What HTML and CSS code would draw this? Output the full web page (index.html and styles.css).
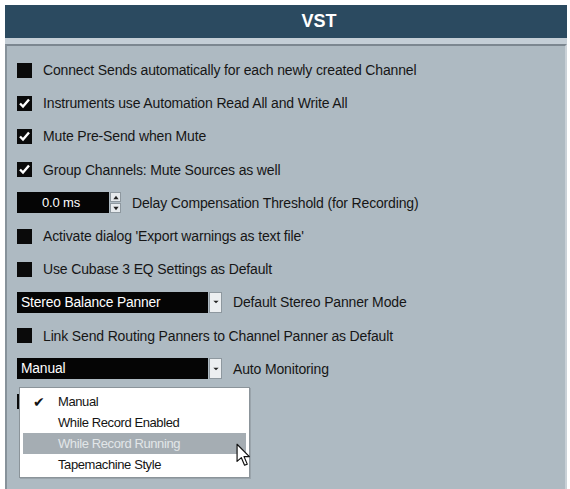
FILE: index.html
```html
<!DOCTYPE html>
<html>
<head>
<meta charset="utf-8">
<link rel="stylesheet" href="styles.css">
</head>
<body>
<div class="window">
  <div class="title">VST</div>
  <div class="strip"></div>
  <div class="panel">
    <div class="row"><span class="cb"></span><span class="lbl">Connect Sends automatically for each newly created Channel</span></div>
    <div class="row"><span class="cb on"><svg viewBox="0 0 15 15"><path d="M3 7.5 L6 10.5 L12 3.5" fill="none" stroke="#fff" stroke-width="2.4"/></svg></span><span class="lbl">Instruments use Automation Read All and Write All</span></div>
    <div class="row"><span class="cb on"><svg viewBox="0 0 15 15"><path d="M3 7.5 L6 10.5 L12 3.5" fill="none" stroke="#fff" stroke-width="2.4"/></svg></span><span class="lbl">Mute Pre-Send when Mute</span></div>
    <div class="row"><span class="cb on"><svg viewBox="0 0 15 15"><path d="M3 7.5 L6 10.5 L12 3.5" fill="none" stroke="#fff" stroke-width="2.4"/></svg></span><span class="lbl">Group Channels: Mute Sources as well</span></div>
    <div class="row">
      <span class="num">0.0 ms</span>
      <span class="spin"><span class="sb"><svg viewBox="0 0 9 8"><path d="M1.5 6 L4.5 2 L7.5 6Z" fill="#222"/></svg></span><span class="sb"><svg viewBox="0 0 9 8"><path d="M1.5 2 L4.5 6 L7.5 2Z" fill="#222"/></svg></span></span>
      <span class="lbl">Delay Compensation Threshold (for Recording)</span>
    </div>
    <div class="row"><span class="cb"></span><span class="lbl">Activate dialog 'Export warnings as text file'</span></div>
    <div class="row"><span class="cb"></span><span class="lbl">Use Cubase 3 EQ Settings as Default</span></div>
    <div class="row">
      <span class="combo"><span class="val">Stereo Balance Panner</span><span class="drop"><svg viewBox="0 0 9 6"><path d="M1.5 1.5 L4.5 4.5 L7.5 1.5Z" fill="#222"/></svg></span></span>
      <span class="lbl">Default Stereo Panner Mode</span>
    </div>
    <div class="row"><span class="cb"></span><span class="lbl">Link Send Routing Panners to Channel Panner as Default</span></div>
    <div class="row">
      <span class="combo"><span class="val">Manual</span><span class="drop"><svg viewBox="0 0 9 6"><path d="M1.5 1.5 L4.5 4.5 L7.5 1.5Z" fill="#222"/></svg></span></span>
      <span class="lbl">Auto Monitoring</span>
    </div>
    <div class="row"><span class="cb"></span><span class="lbl"></span></div>

    <div class="menu">
      <div class="item"><span class="tick">&#10004;</span>Manual</div>
      <div class="item">While Record Enabled</div>
      <div class="item hl">While Record Running</div>
      <div class="item">Tapemachine Style</div>
    </div>
    <svg class="cursor" viewBox="0 0 14 22" width="15" height="24"><path d="M1 1 L1 17 L5 13.5 L8 20.5 L10.5 19.5 L7.5 12.5 L12.5 12.5 Z" fill="#fff" stroke="#111" stroke-width="1.1" stroke-linejoin="round"/></svg>
  </div>
</div>
</body>
</html>
```

FILE: styles.css
```css
body {
  margin: 0;
  background: #ffffff;
  font-family: "Liberation Sans", Arial, sans-serif;
}

.window {
  margin: 5px 3px 0 5px;
}

.title {
  height: 33px;
  background: #2b4a60;
  color: #ffffff;
  font-weight: bold;
  font-size: 18px;
  display: flex;
  align-items: center;
  justify-content: center;
  padding-left: 66px;
}

.strip {
  height: 6px;
  background: #c4ced6;
}

.panel {
  position: relative;
  height: 437px;
  background: #aebac2;
  border-top: 2px solid #7c8790;
  border-left: 2px solid #87929a;
  border-right: 2px solid #c9d1d7;
  padding: 7.5px 0 0 10px;
  overflow: hidden;
}

.row {
  height: 33.2px;
  display: flex;
  align-items: center;
  font-size: 14px;
  letter-spacing: -0.15px;
  color: #161616;
}

.cb {
  width: 15px;
  height: 15px;
  background: #0a0a0a;
  margin-right: 11px;
  flex: none;
  display: flex;
}

.cb svg {
  width: 15px;
  height: 15px;
}

.lbl {
  white-space: nowrap;
}

.num {
  width: 92px;
  height: 21px;
  background: #050505;
  color: #ffffff;
  display: flex;
  align-items: center;
  padding-left: 25px;
  box-sizing: border-box;
  font-size: 13px;
}

.spin {
  width: 11px;
  height: 21px;
  margin-left: 1px;
  margin-right: 11px;
  display: flex;
  flex-direction: column;
  gap: 1px;
}

.sb {
  flex: 1;
  background: #e6eaed;
  border: 1px solid #8e989f;
  display: flex;
  align-items: center;
  justify-content: center;
}

.sb svg {
  width: 8px;
  height: 7px;
}

.combo {
  display: flex;
  margin-right: 11px;
}

.val {
  width: 191px;
  height: 21px;
  background: #050505;
  color: #ffffff;
  display: flex;
  align-items: center;
  padding-left: 4px;
  box-sizing: border-box;
  font-size: 13.8px;
}

.drop {
  width: 13px;
  height: 21px;
  margin-left: 1px;
  background: #eceff1;
  border: 1px solid #8e989f;
  box-sizing: border-box;
  display: flex;
  align-items: center;
  justify-content: center;
}

.drop svg {
  width: 8px;
  height: 6px;
}

.menu {
  position: absolute;
  left: 12px;
  top: 341px;
  width: 223px;
  background: #ffffff;
  border: 1px solid #8b949a;
  padding: 3px 3px 2px 3px;
  box-shadow: 1px 1px 0 #9aa4ab;
}

.item {
  height: 21px;
  display: flex;
  align-items: center;
  padding-left: 35px;
  position: relative;
  font-size: 13px;
  letter-spacing: -0.4px;
  color: #141414;
}

.item.hl {
  background: #a5adb3;
  color: #e2e6e8;
}

.tick {
  position: absolute;
  left: 10px;
  font-size: 14px;
  letter-spacing: 0;
}

.cursor {
  position: absolute;
  left: 229px;
  top: 397px;
}
```
